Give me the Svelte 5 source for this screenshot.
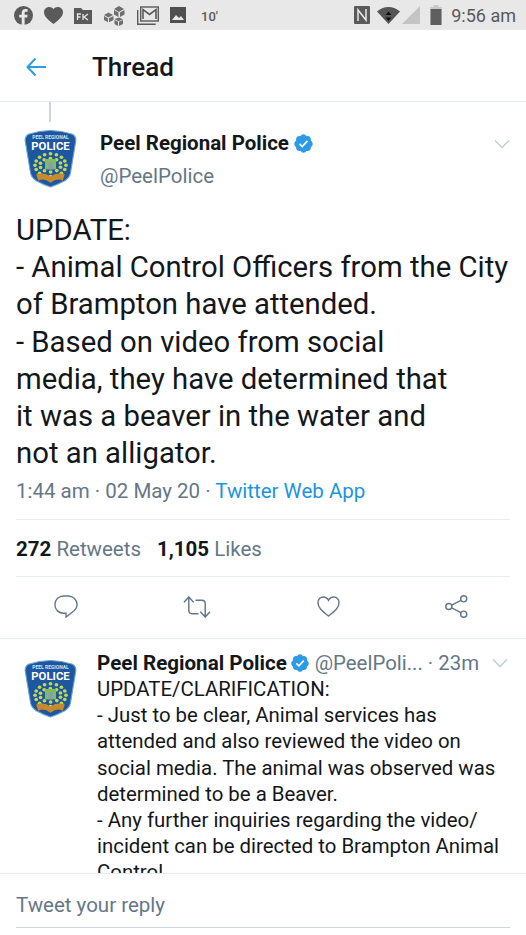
<script>
  const dots = [];
  for (let i = 0; i < 16; i++) {
    const a = (i / 16) * Math.PI * 2;
    dots.push({ x: 24 + Math.cos(a) * 14, y: 36 + Math.sin(a) * 11 });
  }
  for (let i = 0; i < 10; i++) {
    const a = (i / 10) * Math.PI * 2 + 0.3;
    dots.push({ x: 24 + Math.cos(a) * 9.5, y: 36 + Math.sin(a) * 6.5 });
  }
</script>

{#snippet badge()}
  <svg class="badge" viewBox="0 0 48 58" preserveAspectRatio="none">
    <path d="M4 6 Q24 -1 44 6 Q47 8 47 12 L42 44 Q41 48 37 51 Q30 55 24 57 Q18 55 11 51 Q7 48 6 44 L1 12 Q1 8 4 6Z" fill="#1c57a0" stroke="#6fa3d8" stroke-width="1"/>
    <text x="24" y="10.500" class="small" text-anchor="middle">PEEL REGIONAL</text>
    <text x="24" y="21" class="big" text-anchor="middle">POLICE</text>
    {#each dots as d}
      <circle cx={d.x} cy={d.y} r="1.700" fill="#c4d94a"/>
    {/each}
    <rect x="19" y="30" width="10" height="10" fill="#7fbf5a"/>
    <rect x="22" y="33" width="4" height="7" fill="#8a9db0"/>
    <path d="M11 45 Q18 42 24 47 Q30 42 37 45 L35 51 Q30 48 24 53 Q18 48 13 51Z" fill="#c98a2e"/>
  </svg>
{/snippet}

{#snippet verified(size)}
  <svg class="verified" width={size} height={size} viewBox="0 0 24 24">
    <path d="M22.5 12.5c0-1.58-.88-2.95-2.16-3.6.15-.44.23-.92.23-1.4 0-2.2-1.7-4-3.8-4-.47 0-.92.08-1.34.25C14.8 2.5 13.5 1.5 12 1.5s-2.8 1-3.43 2.25c-.42-.17-.87-.25-1.34-.25-2.1 0-3.8 1.8-3.8 4 0 .48.08.96.23 1.4-1.28.65-2.16 2.02-2.16 3.6 0 1.5.8 2.8 1.98 3.48-.02.17-.03.34-.03.52 0 2.2 1.7 4 3.8 4 .47 0 .92-.09 1.34-.25.63 1.25 1.93 2.25 3.41 2.25s2.78-1 3.41-2.25c.42.16.87.25 1.34.25 2.1 0 3.8-1.8 3.8-4 0-.18-.01-.35-.03-.52 1.18-.68 1.98-1.98 1.98-3.48z" fill="#2b9ae8"/>
    <path d="M7.5 12.5l3.1 3 5.9-6.4" fill="none" stroke="#fff" stroke-width="2"/>
  </svg>
{/snippet}

{#snippet chevron()}
  <svg class="chevron" width="16" height="10" viewBox="0 0 16 10"><path d="M1 1.5l7 7 7-7" fill="none" stroke="#c3ccd3" stroke-width="1.5"/></svg>
{/snippet}

<div class="page">
  <div class="status">
    <div class="status-left">
      <svg width="19" height="19" viewBox="0 0 19 19"><circle cx="9.5" cy="9.5" r="9.5" fill="#5a5a5a"/><path d="M10.6 19v-7.4h2.6l.4-2.8h-3V7.2c0-.8.3-1.4 1.4-1.4h1.6V3.3c-.8-.1-1.5-.2-2.2-.2-2.3 0-3.7 1.400-3.700 3.800v1.900H5.200v2.800h2.500V19z" fill="#e8e8e8"/></svg>
      <svg width="19" height="17" viewBox="0 0 19 17"><path d="M9.500 17C4 12.500 0 9.500 0 5.200 0 2.200 2.300 0 5.200 0c1.700 0 3.300.8 4.300 2.100C10.500.8 12.100 0 13.800 0 16.700 0 19 2.200 19 5.200c0 4.300-4 7.300-9.500 11.800z" fill="#5a5a5a"/></svg>
      <svg width="18" height="17" viewBox="0 0 18 17"><path d="M0 1h7l2 2h9v14H0z" fill="#5a5a5a"/><path d="M3.500 13V7H7M3.500 10H6.500M9 7v6M14 7l-4 3 4 3" fill="none" stroke="#e8e8e8" stroke-width="1.300"/></svg>
      <svg width="23" height="21" viewBox="0 0 23 21"><g fill="#6e6e6e"><path d="M11 4l5-3 5 3-5 3z"/><path d="M11 5l4.500 2.600v4.500L11 9.500z"/><path d="M21.500 5L17 7.600v4.500l4.500-2.600z"/><path d="M1 10l4.500-2.500L10 10l-4.500 2.500z"/><path d="M1 11l4 2.300v4L1 15z"/><path d="M10.500 11L6 13.300v4l4.500-2.300z"/><path d="M11.500 14l4.500-1.500 4 1.800-4.500 2z"/><path d="M11.500 15l3.500 1.800V21l-3.500-2z"/><path d="M20 15l-4 1.800V21l4-2z"/></g></svg>
      <svg width="22" height="19" viewBox="0 0 22 19"><path d="M.7 4v14.300h18" fill="none" stroke="#5a5a5a" stroke-width="1.400"/><rect x="3.700" y="1" width="17.600" height="14" fill="none" stroke="#5a5a5a" stroke-width="1.400"/><path d="M6 13V3.500l6.500 5 6.500-5V13" fill="none" stroke="#5a5a5a" stroke-width="1.600"/></svg>
      <svg width="16" height="16" viewBox="0 0 16 16"><rect width="16" height="16" fill="#4f4f4f"/><path d="M2 13l4-5 3 3 2-2 3 4z" fill="#e8e8e8"/></svg>
      <span class="ten">10'</span>
    </div>
    <div class="status-right">
      <svg class="nfc" width="16" height="18" viewBox="0 0 16 18"><rect width="16" height="18" rx="1" fill="#5a5a5a"/><path d="M4 15V4l8 10V3" fill="none" stroke="#e8e8e8" stroke-width="1.500"/></svg>
      <svg class="wifi" width="23" height="17" viewBox="0 0 23 17"><path d="M0 4.500C3 1.800 7 0 11.500 0S20 1.800 23 4.500L11.500 17z" fill="#555"/><path d="M11.500 4.500l3 3.500h-6zM11.500 14l3-3.500h-6z" fill="#111"/></svg>
      <svg class="signal" width="18" height="18" viewBox="0 0 18 18"><path d="M18 0v18H0z" fill="#c4c4c4"/></svg>
      <svg class="battery" width="12" height="20" viewBox="0 0 12 20"><path d="M3.500 0h5v2h3v18H.5V2h3z" fill="#c8c8c8"/><rect x=".5" y="4" width="11" height="16" fill="#5f5f5f"/></svg>
      <span class="clock">9:56 am</span>
    </div>
  </div>

  <header class="top">
    <svg class="back" width="20" height="20" viewBox="0 0 20 20"><path d="M20 10H1.500M9.500 1.500L1.500 10l8 8.500" fill="none" stroke="#2b9ce8" stroke-width="2"/></svg>
    <h1>Thread</h1>
  </header>

  <div class="main-tweet">
    <div class="stem"></div>
    <div class="author">
      {@render badge()}
      <div class="who">
        <div class="name-line"><span class="name">Peel Regional Police</span>{@render verified(21)}</div>
        <div class="handle">@PeelPolice</div>
      </div>
      {@render chevron()}
    </div>
    <p class="body">UPDATE:<br>- Animal Control Officers from the City<br>of Brampton have attended.<br>- Based on video from social<br>media, they have determined that<br>it was a beaver in the water and<br>not an alligator.</p>
    <div class="meta">1:44 am · 02 May 20 · <span class="link">Twitter Web App</span></div>
    <div class="stats"><span><b>272</b> Retweets</span><span><b>1,105</b> Likes</span></div>
    <div class="actions">
      <svg width="24" height="23" viewBox="0 0 26 24" preserveAspectRatio="none"><path d="M10.500 1h5C20 1 25 4.500 25 10c0 4-2.500 6.500-6 8.500L13 23v-4h-2.500C5 19 1 15.500 1 10s4.500-9 9.500-9z" fill="none" stroke="#657786" stroke-width="1.500"/></svg>
      <svg width="28" height="22" viewBox="0 0 29 23" preserveAspectRatio="none"><path d="M1 6.500L6 1l5 5.500M6 1.500V15c0 2.200 1.300 3.500 3.500 3.500H16M28 16.500L23 22l-5-5.500M23 21.500V8c0-2.200-1.300-3.500-3.500-3.500H13" fill="none" stroke="#657786" stroke-width="1.500"/></svg>
      <svg width="23" height="21" viewBox="0 0 24 22" preserveAspectRatio="none"><path d="M12 21C5 15.500 1 12 1 7c0-3.500 2.500-6 5.500-6C9 1 11 2.500 12 4.500 13 2.500 15 1 17.500 1 20.500 1 23 3.500 23 7c0 5-4 8.500-11 14z" fill="none" stroke="#657786" stroke-width="1.500"/></svg>
      <svg width="23" height="23" viewBox="0 0 24 24"><g fill="none" stroke="#657786" stroke-width="1.500"><circle cx="19.500" cy="4" r="3.200"/><circle cx="4" cy="12" r="3.200"/><circle cx="19.500" cy="20" r="3.200"/><path d="M6.900 10.500l9.800-5M6.900 13.500l9.800 5"/></g></svg>
    </div>
  </div>

  <div class="reply">
    {@render badge()}
    <div class="reply-main">
      <div class="reply-head">
        <span class="name r">Peel Regional Police</span>
        {@render verified(20)}
        <span class="r-handle">@PeelPoli... · 23m</span>
        {@render chevron()}
      </div>
      <p class="reply-body">UPDATE/CLARIFICATION:<br>- Just to be clear, Animal services has<br>attended and also reviewed the video on<br>social media. The animal was observed was<br>determined to be a Beaver.<br>- Any further inquiries regarding the video/<br>incident can be directed to Brampton Animal<br>Control</p>
    </div>
  </div>

  <footer class="composer"><div class="field">Tweet your reply</div></footer>
</div>

<style>
  :global(body) { margin: 0; background: #fff; }
  .page {
    width: 526px; height: 935px; overflow: hidden; display: flex; flex-direction: column;
    font-family: Roboto, "Noto Sans", sans-serif; color: #14171a; background: #fff;
  }
  .status {
    height: 30px; flex: none; background: #e8e8e8; display: flex; justify-content: space-between;
    align-items: center; padding: 0 10px 0 14px; box-sizing: border-box;
  }
  .status-left, .status-right { display: flex; align-items: center; }
  .status-left { gap: 11px; }
  .ten { font-size: 13px; font-weight: 500; color: #5a5a5a; margin: 2px 0 0 4px; }
  .clock { font-size: 18px; color: #5a5a5a; margin-left: 9px; }
  .wifi { margin-left: 7px; }
  .signal { margin-left: 2px; }
  .battery { margin-left: 10px; }
  .top {
    height: 72px; flex: none; display: flex; align-items: center; box-sizing: border-box;
    border-bottom: 1px solid #e6ecf0; padding: 3px 0 0 26px;
  }
  .back { margin-right: 46px; }
  h1 { font-size: 26px; font-weight: 500; margin: 0; color: #14171a; }
  .main-tweet { flex: none; padding: 0 16px; border-bottom: 1px solid #e6ecf0; height: 537px; box-sizing: border-box; }
  .stem { width: 2px; height: 20px; background: #ccd6dd; margin-left: 33px; }
  .author { display: flex; align-items: flex-start; padding-top: 6px; margin-left: 8px; }
  .badge { width: 53px; height: 60px; flex: none; }
  .small { font: 700 4.500px Roboto, sans-serif; fill: #cfe0f0; }
  .big { font: 700 10.300px Roboto, sans-serif; fill: #fff; }
  .who { flex: 1; margin-left: 23px; }
  .name-line { display: flex; align-items: center; gap: 4px; height: 28px; margin-top: 1px; }
  .name { font-weight: 700; font-size: 20.5px; color: #14171a; }
  .handle { font-size: 20.5px; color: #657786; margin-top: 7px; }
  .chevron { flex: none; margin-top: 11px; }
  .body { margin: 24px 0 0; font-size: 29.3px; line-height: 37.2px; white-space: nowrap; }
  .meta { font-size: 20.5px; color: #657786; margin-top: 5px; line-height: 28px; }
  .link { color: #1b95e0; }
  .stats {
    margin-top: 14px; height: 58px; box-sizing: border-box; border-top: 1px solid #e6ecf0; border-bottom: 1px solid #e6ecf0;
    display: flex; align-items: center; gap: 16px; font-size: 20.5px; color: #657786; padding-top: 2px;
  }
  .stats b { color: #14171a; }
  .actions { display: flex; justify-content: space-between; padding: 18px 42px 0 38px; align-items: center; }
  .reply { flex: 1; display: flex; padding: 10px 16px 0 24px; min-height: 0; overflow: hidden; }
  .reply .badge { margin-top: 9px; }
  .reply-main { margin-left: 20px; flex: 1; min-width: 0; }
  .reply-head { display: flex; align-items: center; height: 27px; white-space: nowrap; }
  .name.r { font-size: 20.6px; }
  .reply-head :global(.verified) { margin-left: 3px; }
  .r-handle { font-size: 20.4px; color: #657786; margin-left: 5px; flex: 1; }
  .reply-head .chevron { margin: 0 2px 0 0; }
  .reply-body { margin: 0; font-size: 20.4px; line-height: 26.2px; white-space: nowrap; }
  .composer { height: 62px; flex: none; border-top: 1px solid #e6ecf0; background: #fff; padding: 0 16px; box-sizing: border-box; }
  .field { height: 54px; line-height: 62px; border-bottom: 1px solid #ccd6dd; font-size: 20.5px; color: #657786; box-sizing: border-box; }
</style>
